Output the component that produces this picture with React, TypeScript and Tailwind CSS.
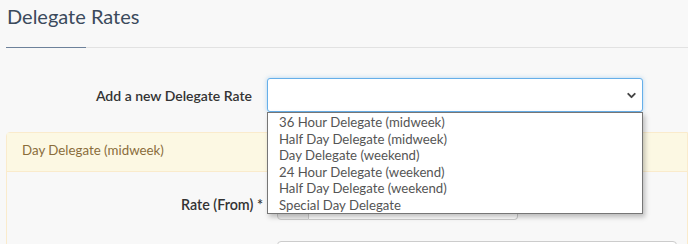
import { ChevronDown } from 'lucide-react'

const OPTIONS = [
  '36 Hour Delegate (midweek)',
  'Half Day Delegate (midweek)',
  'Day Delegate (weekend)',
  '24 Hour Delegate (weekend)',
  'Half Day Delegate (weekend)',
  'Special Day Delegate',
]

export default function App() {
  return (
    <div className="relative w-[688px] h-[244px] overflow-hidden bg-[#f8f8f8] font-['Lato','Liberation_Sans',sans-serif] text-[#333]">
      {/* page title */}
      <div className="pl-[7px] pt-[2px]">
        <h1 className="text-[20px] leading-[28px] text-[#3b4a5c]">Delegate Rates</h1>
      </div>
      <div className="mt-[17px] ml-[6px] flex h-px bg-[#e2e2e2]">
        <div className="w-[80px] h-px bg-[#6d819a]" />
      </div>

      {/* add row */}
      <div className="mt-[30px] flex items-center">
        <label className="w-[252px] text-right text-[14px] font-semibold text-[#333]">Add a new Delegate Rate</label>
        <div className="ml-[15px] w-[376px] h-[34px] bg-white border border-[#66afe9] rounded-[3px] shadow-[0_0_4px_rgba(102,175,233,0.5)] flex items-center justify-end pr-[4px]">
          <ChevronDown className="w-[13px] h-[13px] text-[#444]" strokeWidth={3.5} />
        </div>
      </div>

      {/* panel */}
      <div className="mt-[20px] ml-[6px] border border-[#faebcc] rounded-tl-[4px]">
        <div className="h-[39px] bg-[#fcf8e3] border-b border-[#faebcc] flex items-center pl-[15px] pb-[2px] text-[13.3px] text-[#8a6d3b]">
          Day Delegate (midweek)
        </div>
        <div className="pt-[18px]">
          <div className="flex items-center">
            <label className="w-[256px] text-right text-[14.3px] font-semibold text-[#333]">Rate (From) *</label>
            <div className="ml-[14px] flex w-[241px] h-[30px]">
              <div className="w-[32px] bg-[#eeeeee] border border-[#cccccc] rounded-l-[4px]" />
              <div className="flex-1 bg-white border border-l-0 border-[#cccccc] rounded-r-[4px]" />
            </div>
          </div>
          <div className="mt-[21px] ml-[270px] w-[400px] h-[30px] bg-white border border-[#cccccc] rounded-[4px]" />
        </div>
      </div>

      {/* open select list */}
      <ul className="absolute left-[267px] top-[112px] w-[376px] h-[102px] bg-white border border-[#767676] shadow-[2px_3px_5px_rgba(0,0,0,0.25)] pl-[11px] pt-[1px] text-[13.2px] leading-[16.6px] text-[#555]">
        {OPTIONS.map((o) => (
          <li key={o}>{o}</li>
        ))}
      </ul>
    </div>
  )
}
